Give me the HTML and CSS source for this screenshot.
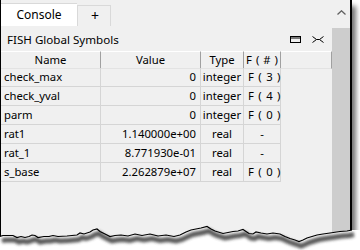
FILE: index.html
```html
<!DOCTYPE html>
<html>
<head>
<meta charset="utf-8">
<link rel="stylesheet" href="styles.css">
</head>
<body>
<div class="frame">
  <div class="window">
    <div class="main">
      <div class="tabbar">
        <div class="tab active">Console</div>
        <div class="tab plus">+</div>
      </div>
      <div class="panel">
        <div class="titlebar">
          <span class="title">FISH Global Symbols</span>
          <span class="icons">
            <svg class="ico" width="11" height="7" viewBox="0 0 11 7"><rect x="0.5" y="0.5" width="10" height="6" fill="none" stroke="#000" stroke-width="1"/><line x1="1" y1="2" x2="10" y2="2" stroke="#000" stroke-width="1"/></svg>
            <svg class="ico" width="12" height="7" viewBox="0 0 12 7"><path d="M0.5 0.5 L4.5 3.5 L7.5 3.5 L11.5 0.5 M0.5 6.5 L4.5 3.5 M7.5 3.5 L11.5 6.5" fill="none" stroke="#000" stroke-width="1"/></svg>
          </span>
        </div>
        <div class="grid">
          <div class="row head">
            <div class="c">Name</div>
            <div class="c">Value</div>
            <div class="c">Type</div>
            <div class="c fh">F ( # )</div>
            <div class="c fill"></div>
          </div>
          <div class="row">
            <div class="c name">check_max</div>
            <div class="c val">0</div>
            <div class="c typ">integer</div>
            <div class="c f">F ( 3 )</div>
          </div>
          <div class="row">
            <div class="c name">check_yval</div>
            <div class="c val">0</div>
            <div class="c typ">integer</div>
            <div class="c f">F ( 4 )</div>
          </div>
          <div class="row">
            <div class="c name">parm</div>
            <div class="c val">0</div>
            <div class="c typ">integer</div>
            <div class="c f">F ( 0 )</div>
          </div>
          <div class="row">
            <div class="c name">rat1</div>
            <div class="c val">1.140000e+00</div>
            <div class="c typ">real</div>
            <div class="c f dash">-</div>
          </div>
          <div class="row">
            <div class="c name">rat_1</div>
            <div class="c val">8.771930e-01</div>
            <div class="c typ">real</div>
            <div class="c f dash">-</div>
          </div>
          <div class="row">
            <div class="c name">s_base</div>
            <div class="c val">2.262879e+07</div>
            <div class="c typ">real</div>
            <div class="c f">F ( 0 )</div>
          </div>
        </div>
      </div>
    </div>
    <div class="scrollbar">
      <div class="sbtn">
        <svg width="9" height="5" viewBox="0 0 9 5"><path d="M0.5 4.5 L4.5 0.8 L8.5 4.5" fill="none" stroke="#606060" stroke-width="1.3"/></svg>
      </div>
      <div class="track"></div>
    </div>
  </div>
  <svg class="torn" width="360" height="30" viewBox="0 0 360 30">
    <defs>
      <filter id="blur" x="-10%" y="-100%" width="120%" height="300%">
        <feGaussianBlur stdDeviation="1.8"/>
      </filter>
    </defs>
    <polygon fill="#fff" points="0,30 0,16.5 3,15.5 13,15.5 17,17.5 21,16.5 25,17.5 29,16.5 32,15 35,15.5 38,17.5 44,16.5 49,16.5 53,15.5 58,16.5 67,16 77,15 80,13 84,14 90,12 93,10 97,9 100,11.5 104,13.5 107,15 110,16.5 115,15.5 121,15 128,16 135,14 142,15.5 150,14 158,16 166,15 174,16.5 180,15 186,12 191,10 196,9 201,8 207,6.5 211,9 215,11 223,13.5 228,12.5 233,11.5 238,11 243,9.5 246,11.5 249,13.5 253,14 256,12 261,13 267,14 273,13 280,14 285,16.5 290,18.5 295,20 299,21.5 303,20 307,18 312,16.5 317,15 323,14 330,13 340,11.5 347,11 352,10 360,10 360,30"/>
    <polyline filter="url(#blur)" transform="translate(2,4.5)" fill="none" stroke="#3a3a3a" stroke-width="5" opacity="0.85" points="0,16.5 3,15.5 13,15.5 17,17.5 21,16.5 25,17.5 29,16.5 32,15 35,15.5 38,17.5 44,16.5 49,16.5 53,15.5 58,16.5 67,16 77,15 80,13 84,14 90,12 93,10 97,9 100,11.5 104,13.5 107,15 110,16.5 115,15.5 121,15 128,16 135,14 142,15.5 150,14 158,16 166,15 174,16.5 180,15 186,12 191,10 196,9 201,8 207,6.5 211,9 215,11 223,13.5 228,12.5 233,11.5 238,11 243,9.5 246,11.5 249,13.5 253,14 256,12 261,13 267,14 273,13 280,14 285,16.5 290,18.5 295,20 299,21.5 303,20 307,18 312,16.5 317,15 323,14 330,13 340,11.5 347,11 352,10"/>
    <polyline fill="none" stroke="#000" stroke-width="1.2" points="0,16.5 3,15.5 13,15.5 17,17.5 21,16.5 25,17.5 29,16.5 32,15 35,15.5 38,17.5 44,16.5 49,16.5 53,15.5 58,16.5 67,16 77,15 80,13 84,14 90,12 93,10 97,9 100,11.5 104,13.5 107,15 110,16.5 115,15.5 121,15 128,16 135,14 142,15.5 150,14 158,16 166,15 174,16.5 180,15 186,12 191,10 196,9 201,8 207,6.5 211,9 215,11 223,13.5 228,12.5 233,11.5 238,11 243,9.5 246,11.5 249,13.5 253,14 256,12 261,13 267,14 273,13 280,14 285,16.5 290,18.5 295,20 299,21.5 303,20 307,18 312,16.5 317,15 323,14 330,13 340,11.5 347,11 352,10"/>
  </svg>
</div>
</body>
</html>
```
FILE: styles.css
```css
html, body {
  margin: 0;
  padding: 0;
  background: #fff;
}
body {
  font-family: "Noto Sans", "Open Sans", sans-serif;
  font-size: 11.3px;
  color: #000;
}
.frame {
  position: relative;
  width: 360px;
  height: 250px;
  overflow: hidden;
}
.window {
  display: flex;
  width: 352px;
  height: 250px;
  box-sizing: border-box;
  border-left: 1px solid #000;
  border-right: 2px solid #000;
  box-shadow: 4px 6px 5px rgba(0, 0, 0, 0.55);
  background: #f0f0f0;
}
.main {
  width: 331px;
  display: flex;
  flex-direction: column;
  background: #f0f0f0;
}
.tabbar {
  height: 26px;
  display: flex;
  align-items: flex-end;
  background: #f0f0f0;
}
.tab {
  box-sizing: border-box;
  display: flex;
  align-items: center;
  justify-content: center;
  line-height: 1;
}
.tab.active {
  width: 76px;
  height: 23px;
  background: #fff;
  border-top: 1px solid #d9d9d9;
  padding-bottom: 1px;
  font-size: 12px;
}
.tab.plus {
  width: 34px;
  height: 21px;
  background: #f0f0f0;
  border-top: 1px solid #d9d9d9;
  border-left: 1px solid #d9d9d9;
  border-right: 1px solid #d9d9d9;
  font-size: 14px;
  padding-bottom: 1px;
  padding-left: 2px;
}
.panel {
  display: flex;
  flex-direction: column;
}
.titlebar {
  height: 25px;
  box-sizing: border-box;
  padding: 2px 8px 0 6px;
  display: flex;
  align-items: center;
  justify-content: space-between;
  font-size: 11.6px;
}
.icons {
  display: flex;
  align-items: center;
  gap: 11px;
}
.ico {
  display: block;
}
.grid {
  display: flex;
  flex-direction: column;
}
.row {
  display: grid;
  grid-template-columns: 100px 100px 43px 37px;
  height: 19px;
}
.c {
  box-sizing: border-box;
  border-right: 1px solid #d5d5d5;
  border-bottom: 1px solid #d5d5d5;
  display: flex;
  align-items: center;
  white-space: nowrap;
  padding-bottom: 1px;
}
.row.head {
  grid-template-columns: 100px 100px 43px 37px 51px;
  height: 17px;
}
.row.head .c {
  justify-content: center;
  border-top: 1px solid #fff;
  border-right: 1px solid #a0a0a0;
  border-bottom: 1px solid #e3e3e3;
}
.row.head .c.fill {
  border-right: 1px solid #a0a0a0;
}
.fh {
  word-spacing: 1px;
}
.name {
  padding-left: 3px;
}
.val {
  justify-content: flex-end;
  padding-right: 4px;
}
.typ {
  justify-content: center;
}
.f {
  padding-left: 4px;
  word-spacing: 1.5px;
}
.f.dash {
  justify-content: center;
  padding-left: 0;
}
.scrollbar {
  width: 18px;
  display: flex;
  flex-direction: column;
}
.sbtn {
  height: 28px;
  background: #f0f0f0;
  display: flex;
  justify-content: center;
  padding-top: 10px;
  box-sizing: border-box;
}
.sbtn svg {
  display: block;
}
.track {
  flex: 1;
  background: #cdcdcd;
}
.torn {
  position: absolute;
  left: 0;
  top: 220px;
  display: block;
}
```
